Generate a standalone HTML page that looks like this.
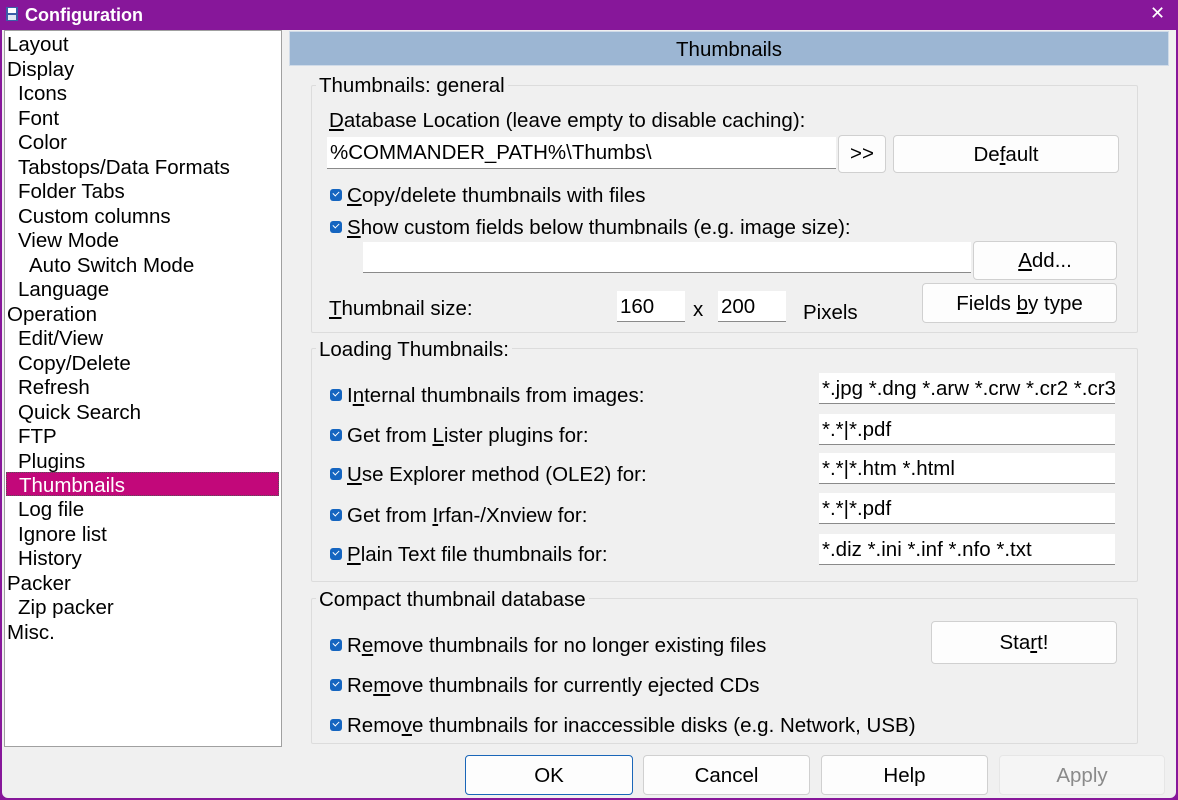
<!DOCTYPE html>
<html><head><meta charset="utf-8"><style>
*{margin:0;padding:0;box-sizing:border-box}
body{width:1178px;height:800px;overflow:hidden;background:#87179a;font-family:"Liberation Sans",sans-serif;font-size:20.5px;color:#000;position:relative}
.win{position:absolute;left:2px;top:30px;width:1174px;height:768px;background:#f0f0f0;border-radius:0 0 6px 6px}
.a{position:absolute;white-space:nowrap}
.title{position:absolute;left:25px;top:5px;color:#fff;font-weight:bold;font-size:18px}
.tree{position:absolute;left:4px;top:30px;width:278px;height:717px;background:#fff;border:1px solid #a0a0a0}
.tree div{position:absolute;left:2px;height:24px;line-height:25px;white-space:nowrap}
.sel{background:#c2087a;color:#fff;width:273px;border:1px dotted #555}
.hdr{position:absolute;left:289px;top:31px;width:880px;height:35px;background:#9cb6d3;border:1px solid #d0dbe8;text-align:center;line-height:36px}
.grp{position:absolute;border:1px solid #dcdcdc;border-radius:2px}
.gl{position:absolute;background:#f0f0f0;padding:0 3px;line-height:21px}
.inp{position:absolute;background:#fff;border-bottom:1px solid #8a8a8a;line-height:31px;padding-left:3px;white-space:nowrap;overflow:hidden}
.btn{position:absolute;background:#fdfdfd;border:1px solid #d0d0d0;border-radius:4px;text-align:center}
.cb{position:absolute;width:12px;height:12px;background:#1565c0;border-radius:3px}
.cb:after{content:"";position:absolute;left:3px;top:2px;width:5px;height:3px;border-left:1.4px solid #fff;border-bottom:1.4px solid #fff;transform:rotate(-45deg)}
u{text-decoration:underline}
</style></head><body>
<svg style="position:absolute;left:5px;top:6px" width="14" height="16"><rect x="1" y="1" width="12" height="14" fill="#3b5fa8"/><rect x="3" y="2" width="8" height="5" fill="#fff"/><rect x="3" y="9" width="8" height="5" fill="#dfe6f4"/></svg>
<div class="title">Configuration</div>
<div class="a" style="left:1150px;top:3px;color:#fff;font-size:18px">✕</div>
<div class="win"></div>
<div class="tree">
<div style="top:1px">Layout</div><div style="top:26px">Display</div>
<div style="top:50px;left:13px">Icons</div><div style="top:75px;left:13px">Font</div>
<div style="top:99px;left:13px">Color</div><div style="top:124px;left:13px">Tabstops/Data Formats</div>
<div style="top:148px;left:13px">Folder Tabs</div><div style="top:173px;left:13px">Custom columns</div>
<div style="top:197px;left:13px">View Mode</div><div style="top:222px;left:24px">Auto Switch Mode</div>
<div style="top:246px;left:13px">Language</div><div style="top:271px">Operation</div>
<div style="top:295px;left:13px">Edit/View</div><div style="top:320px;left:13px">Copy/Delete</div>
<div style="top:344px;left:13px">Refresh</div><div style="top:369px;left:13px">Quick Search</div>
<div style="top:393px;left:13px">FTP</div><div style="top:418px;left:13px">Plugins</div>
<div class="sel" style="top:441px;left:1px;padding-left:12px">Thumbnails</div>
<div style="top:466px;left:13px">Log file</div><div style="top:491px;left:13px">Ignore list</div>
<div style="top:515px;left:13px">History</div><div style="top:540px">Packer</div>
<div style="top:564px;left:13px">Zip packer</div><div style="top:589px">Misc.</div>
</div>
<div class="hdr">Thumbnails</div>

<div class="grp" style="left:311px;top:85px;width:827px;height:248px"></div>
<div class="gl" style="left:316px;top:75px">Thumbnails: general</div>
<div class="a" style="left:329px;top:109px"><u>D</u>atabase Location (leave empty to disable caching):</div>
<div class="inp" style="left:327px;top:137px;width:509px;height:32px">%COMMANDER_PATH%\Thumbs\</div>
<div class="btn" style="left:838px;top:135px;width:48px;height:38px;line-height:36px">&gt;&gt;</div>
<div class="btn" style="left:893px;top:135px;width:226px;height:38px;line-height:37px">De<u>f</u>ault</div>
<div class="cb" style="left:330px;top:189px"></div><div class="a" style="left:347px;top:184px"><u>C</u>opy/delete thumbnails with files</div>
<div class="cb" style="left:330px;top:221px"></div><div class="a" style="left:347px;top:216px"><u>S</u>how custom fields below thumbnails (e.g. image size):</div>
<div class="inp" style="left:363px;top:242px;width:608px;height:31px"></div>
<div class="btn" style="left:973px;top:241px;width:144px;height:39px;line-height:38px"><u>A</u>dd...</div>
<div class="a" style="left:329px;top:297px"><u>T</u>humbnail size:</div>
<div class="inp" style="left:617px;top:291px;width:68px;height:31px">160</div>
<div class="a" style="left:693px;top:298px">x</div>
<div class="inp" style="left:718px;top:291px;width:68px;height:31px">200</div>
<div class="a" style="left:803px;top:301px">Pixels</div>
<div class="btn" style="left:922px;top:283px;width:195px;height:40px;line-height:39px">Fields <u>b</u>y type</div>

<div class="grp" style="left:311px;top:348px;width:827px;height:234px"></div>
<div class="gl" style="left:316px;top:339px">Loading Thumbnails:</div>
<div class="cb" style="left:330px;top:389px"></div><div class="a" style="left:347px;top:384px">I<u>n</u>ternal thumbnails from images:</div>
<div class="inp" style="left:819px;top:373px;width:296px;height:31px">*.jpg *.dng *.arw *.crw *.cr2 *.cr3</div>
<div class="cb" style="left:330px;top:429px"></div><div class="a" style="left:347px;top:424px">Get from <u>L</u>ister plugins for:</div>
<div class="inp" style="left:819px;top:414px;width:296px;height:31px">*.*|*.pdf</div>
<div class="cb" style="left:330px;top:468px"></div><div class="a" style="left:347px;top:463px"><u>U</u>se Explorer method (OLE2) for:</div>
<div class="inp" style="left:819px;top:453px;width:296px;height:31px">*.*|*.htm *.html</div>
<div class="cb" style="left:330px;top:509px"></div><div class="a" style="left:347px;top:504px">Get from <u>I</u>rfan-/Xnview for:</div>
<div class="inp" style="left:819px;top:493px;width:296px;height:31px">*.*|*.pdf</div>
<div class="cb" style="left:330px;top:548px"></div><div class="a" style="left:347px;top:543px"><u>P</u>lain Text file thumbnails for:</div>
<div class="inp" style="left:819px;top:534px;width:296px;height:31px">*.diz *.ini *.inf *.nfo *.txt</div>

<div class="grp" style="left:311px;top:598px;width:827px;height:146px"></div>
<div class="gl" style="left:316px;top:589px">Compact thumbnail database</div>
<div class="cb" style="left:330px;top:639px"></div><div class="a" style="left:347px;top:634px">R<u>e</u>move thumbnails for no longer existing files</div>
<div class="btn" style="left:931px;top:621px;width:186px;height:43px;line-height:42px">Sta<u>r</u>t!</div>
<div class="cb" style="left:330px;top:679px"></div><div class="a" style="left:347px;top:674px">Re<u>m</u>ove thumbnails for currently ejected CDs</div>
<div class="cb" style="left:330px;top:719px"></div><div class="a" style="left:347px;top:714px">Remo<u>v</u>e thumbnails for inaccessible disks (e.g. Network, USB)</div>

<div class="btn" style="left:465px;top:755px;width:168px;height:40px;line-height:39px;border-color:#1a66b8">OK</div>
<div class="btn" style="left:643px;top:755px;width:167px;height:40px;line-height:39px">Cancel</div>
<div class="btn" style="left:821px;top:755px;width:167px;height:40px;line-height:39px">Help</div>
<div class="btn" style="left:999px;top:755px;width:166px;height:40px;line-height:39px;color:#8a8a8a;background:#f5f5f5;border-color:#e6e6e6">Apply</div>
</body></html>
